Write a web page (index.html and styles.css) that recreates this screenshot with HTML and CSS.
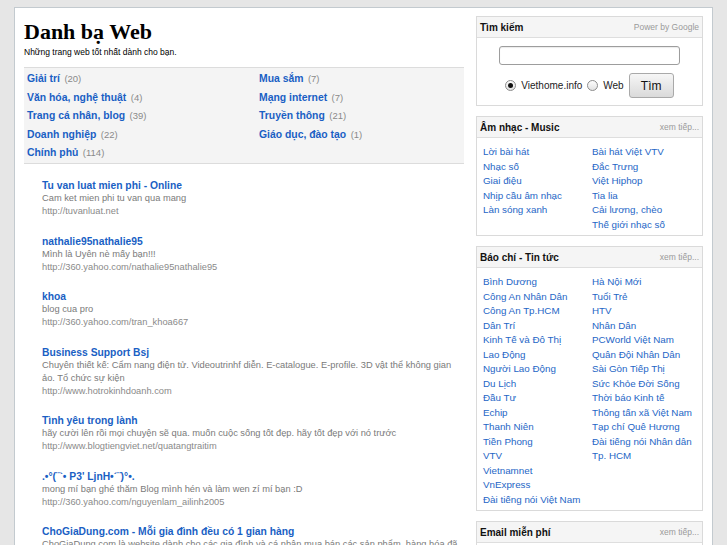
FILE: index.html
```html
<!DOCTYPE html>
<html lang="vi">
<head>
<meta charset="utf-8">
<title>Danh bạ Web</title>
<link rel="stylesheet" href="styles.css">
</head>
<body>
<div class="page">
  <div class="main">
    <h1 class="site-title">Danh bạ Web</h1>
    <p class="tagline">Những trang web tốt nhất dành cho bạn.</p>

    <div class="cats">
      <ul class="cat-col">
        <li><a href="#">Giải trí</a> <span class="cnt">(20)</span></li>
        <li><a href="#">Văn hóa, nghệ thuật</a> <span class="cnt">(4)</span></li>
        <li><a href="#">Trang cá nhân, blog</a> <span class="cnt">(39)</span></li>
        <li><a href="#">Doanh nghiệp</a> <span class="cnt">(22)</span></li>
        <li><a href="#">Chính phủ</a> <span class="cnt">(114)</span></li>
      </ul>
      <ul class="cat-col">
        <li><a href="#">Mua sắm</a> <span class="cnt">(7)</span></li>
        <li><a href="#">Mạng internet</a> <span class="cnt">(7)</span></li>
        <li><a href="#">Truyền thông</a> <span class="cnt">(21)</span></li>
        <li><a href="#">Giáo dục, đào tạo</a> <span class="cnt">(1)</span></li>
      </ul>
    </div>

    <div class="listings">
      <div class="entry">
        <a class="e-title" href="#">Tu van luat mien phi - Online</a>
        <p class="e-desc">Cam ket mien phi tu van qua mang</p>
        <p class="e-url">http://tuvanluat.net</p>
      </div>
      <div class="entry">
        <a class="e-title" href="#">nathalie95nathalie95</a>
        <p class="e-desc">Mình là Uyên nè mấy bạn!!!</p>
        <p class="e-url">http://360.yahoo.com/nathalie95nathalie95</p>
      </div>
      <div class="entry">
        <a class="e-title" href="#">khoa</a>
        <p class="e-desc">blog cua pro</p>
        <p class="e-url">http://360.yahoo.com/tran_khoa667</p>
      </div>
      <div class="entry">
        <a class="e-title" href="#">Business Support Bsj</a>
        <p class="e-desc">Chuyên thiết kế: Cẩm nang điện tử. Videoutrinhf diễn. E-catalogue. E-profile. 3D vật thể không gian ảo. Tổ chức sự kiện</p>
        <p class="e-url">http://www.hotrokinhdoanh.com</p>
      </div>
      <div class="entry">
        <a class="e-title" href="#">Tình yêu trong lành</a>
        <p class="e-desc">hãy cười lên rồi mọi chuyện sẽ qua. muốn cuộc sống tốt đẹp. hãy tốt đẹp với nó trước</p>
        <p class="e-url">http://www.blogtiengviet.net/quatangtraitim</p>
      </div>
      <div class="entry">
        <a class="e-title" href="#">.•°(¨`• P3' LjnH•´¨)°•.</a>
        <p class="e-desc">mong mí bạn ghé thăm Blog mình hén và làm wen zí mí bạn :D</p>
        <p class="e-url">http://360.yahoo.com/nguyenlam_ailinh2005</p>
      </div>
      <div class="entry">
        <a class="e-title" href="#">ChoGiaDung.com - Mỗi gia đình đều có 1 gian hàng</a>
        <p class="e-desc">ChoGiaDung.com là website dành cho các gia đình và cá nhân mua bán các sản phẩm, hàng hóa đã qua sử dụng</p>
        <p class="e-url">http://www.chogiadung.com</p>
      </div>
    </div>
  </div>

  <div class="sidebar">
    <div class="box">
      <div class="box-head"><span class="box-title">Tìm kiếm</span><span class="box-note">Power by Google</span></div>
      <div class="search-body">
        <input class="search-input" type="text" value="">
        <div class="search-row">
          <span class="radio checked"></span><span class="radio-label">Viethome.info</span>
          <span class="radio"></span><span class="radio-label">Web</span>
          <span class="btn">Tìm</span>
        </div>
      </div>
    </div>

    <div class="box">
      <div class="box-head"><span class="box-title">Âm nhạc - Music</span><span class="box-note">xem tiếp...</span></div>
      <div class="links">
        <ul class="link-col">
          <li><a href="#">Lời bài hát</a></li>
          <li><a href="#">Nhạc số</a></li>
          <li><a href="#">Giai điệu</a></li>
          <li><a href="#">Nhịp cầu âm nhạc</a></li>
          <li><a href="#">Làn sóng xanh</a></li>
        </ul>
        <ul class="link-col">
          <li><a href="#">Bài hát Việt VTV</a></li>
          <li><a href="#">Đắc Trưng</a></li>
          <li><a href="#">Việt Hiphop</a></li>
          <li><a href="#">Tia lia</a></li>
          <li><a href="#">Cải lương, chèo</a></li>
          <li><a href="#">Thế giới nhạc số</a></li>
        </ul>
      </div>
    </div>

    <div class="box">
      <div class="box-head"><span class="box-title">Báo chí - Tin tức</span><span class="box-note">xem tiếp...</span></div>
      <div class="links">
        <ul class="link-col">
          <li><a href="#">Bình Dương</a></li>
          <li><a href="#">Công An Nhân Dân</a></li>
          <li><a href="#">Công An Tp.HCM</a></li>
          <li><a href="#">Dân Trí</a></li>
          <li><a href="#">Kinh Tế và Đô Thị</a></li>
          <li><a href="#">Lao Động</a></li>
          <li><a href="#">Người Lao Động</a></li>
          <li><a href="#">Du Lịch</a></li>
          <li><a href="#">Đầu Tư</a></li>
          <li><a href="#">Echip</a></li>
          <li><a href="#">Thanh Niên</a></li>
          <li><a href="#">Tiền Phong</a></li>
          <li><a href="#">VTV</a></li>
          <li><a href="#">Vietnamnet</a></li>
          <li><a href="#">VnExpress</a></li>
          <li><a href="#">Đài tiếng nói Việt Nam</a></li>
        </ul>
        <ul class="link-col">
          <li><a href="#">Hà Nội Mới</a></li>
          <li><a href="#">Tuổi Trẻ</a></li>
          <li><a href="#">HTV</a></li>
          <li><a href="#">Nhân Dân</a></li>
          <li><a href="#">PCWorld Việt Nam</a></li>
          <li><a href="#">Quân Đội Nhân Dân</a></li>
          <li><a href="#">Sài Gòn Tiếp Thị</a></li>
          <li><a href="#">Sức Khỏe Đời Sống</a></li>
          <li><a href="#">Thời báo Kinh tế</a></li>
          <li><a href="#">Thông tấn xã Việt Nam</a></li>
          <li><a href="#">Tạp chí Quê Hương</a></li>
          <li><a href="#">Đài tiếng nói Nhân dân</a></li>
          <li><a href="#">Tp. HCM</a></li>
        </ul>
      </div>
    </div>

    <div class="box">
      <div class="box-head"><span class="box-title">Email miễn phí</span><span class="box-note">xem tiếp...</span></div>
      <div class="links">
        <ul class="link-col">
          <li><a href="#">Yahoo Mail</a></li>
          <li><a href="#">Gmail</a></li>
        </ul>
        <ul class="link-col">
          <li><a href="#">Hotmail</a></li>
        </ul>
      </div>
    </div>
  </div>
</div>
</body>
</html>
```

FILE: styles.css
```css
html, body {
  margin: 0;
  padding: 0;
}
body {
  background: #e6e6e6;
  font-family: "Liberation Sans", Arial, sans-serif;
  color: #000;
  overflow: hidden;
}
ul {
  list-style: none;
  margin: 0;
  padding: 0;
}
p {
  margin: 0;
}
a {
  text-decoration: none;
}

.page {
  box-sizing: border-box;
  width: 699px;
  min-height: 600px;
  margin: 7px 0 0 14px;
  padding: 8px 9px 0 9px;
  background: #fff;
  border: 1px solid #c3cacf;
  display: flex;
  align-items: flex-start;
  gap: 12px;
}

/* main column */
.main {
  width: 440px;
  flex: none;
}
.site-title {
  margin: 3px 0 0 0;
  font-family: "Liberation Serif", "Times New Roman", serif;
  font-size: 22px;
  line-height: 25px;
  font-weight: bold;
}
.tagline {
  margin-top: 2px;
  font-size: 8.5px;
  line-height: 12px;
}

.cats {
  margin-top: 9px;
  background: #f4f4f4;
  border-top: 1px solid #dcdcdc;
  border-bottom: 1px solid #dcdcdc;
  padding: 0 0 2px 3px;
  display: grid;
  grid-template-columns: 232px 1fr;
}
.cat-col li {
  line-height: 18.5px;
  height: 18.5px;
  white-space: nowrap;
}
.cat-col a {
  color: #1a5fc4;
  font-weight: bold;
  font-size: 10.4px;
}
.cnt {
  color: #8a8a8a;
  font-size: 9.5px;
}

.listings {
  padding: 15.5px 0 0 18px;
}
.entry {
  margin-bottom: 16.5px;
}
.e-title {
  display: block;
  color: #1a5fc4;
  font-weight: bold;
  font-size: 10.3px;
  line-height: 13px;
}
.e-desc {
  color: #7a7a7a;
  font-size: 9.3px;
  line-height: 13px;
}
.e-url {
  color: #8a8a8a;
  font-size: 9.3px;
  line-height: 13px;
}

/* sidebar */
.sidebar {
  width: 227px;
  flex: none;
  display: flex;
  flex-direction: column;
  gap: 10px;
}
.box {
  border: 1px solid #dadada;
  background: #fff;
}
.box-head {
  height: 20px;
  background: #f5f5f5;
  border-bottom: 1px solid #dedede;
  display: flex;
  align-items: center;
  justify-content: space-between;
  padding: 0 3px 0 3px;
}
.box-title {
  font-weight: bold;
  font-size: 10px;
  color: #111;
}
.box-note {
  font-size: 8.5px;
  color: #9a9a9a;
}

.search-body {
  padding: 8px 0 7px 0;
  display: flex;
  flex-direction: column;
  align-items: center;
}
.search-input {
  box-sizing: border-box;
  width: 181px;
  height: 19px;
  margin: 0;
  border: 1px solid #9d9d9d;
  border-radius: 3px;
  background: #fff;
  box-shadow: inset 0 1px 1px rgba(0,0,0,0.08);
  padding: 0 4px;
}
.search-row {
  margin-top: 8px;
  display: flex;
  align-items: center;
}
.radio {
  box-sizing: border-box;
  width: 11px;
  height: 11px;
  border: 1px solid #8c8c8c;
  border-radius: 50%;
  background: linear-gradient(#fdfdfd, #e2e2e2);
  display: flex;
  align-items: center;
  justify-content: center;
}
.radio.checked::after {
  content: "";
  width: 5px;
  height: 5px;
  border-radius: 50%;
  background: #111;
}
.radio-label {
  font-size: 10px;
  color: #222;
  margin: 0 5px 0 5px;
}
.btn {
  box-sizing: border-box;
  width: 45px;
  height: 25px;
  border: 1px solid #a9a9a9;
  border-radius: 3px;
  background: linear-gradient(#f6f6f6, #dadada);
  font-size: 12px;
  color: #111;
  display: flex;
  align-items: center;
  justify-content: center;
}

.links {
  padding: 5px 0 5px 6px;
  display: grid;
  grid-template-columns: 109px 1fr;
}
.link-col li {
  line-height: 14.5px;
  height: 14.5px;
  white-space: nowrap;
}
.link-col a {
  color: #2566c6;
  font-size: 9.8px;
}
```
